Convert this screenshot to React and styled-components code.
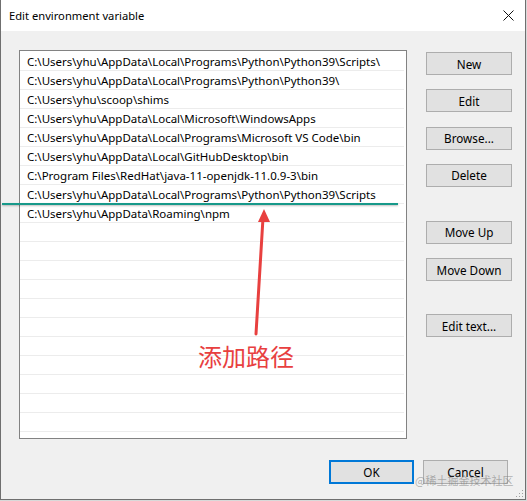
import React from 'react'
import styled, { createGlobalStyle } from 'styled-components'

const GlobalStyle = createGlobalStyle`
    html, body {
        margin: 0;
        padding: 0;
        background: #d9d9d9;
    }
    body {
        font-family: "Noto Sans", "Liberation Sans", sans-serif;
        font-size: 12px;
        color: #000;
    }
`

const Window = styled.div`
    position: relative;
    box-sizing: border-box;
    width: 526px;
    height: 500px;
    background: #f0f0f0;
    border: 1px solid #6f6f6f;
    border-top: none;
    display: flex;
    flex-direction: column;
    overflow: hidden;
`

const TitleBar = styled.div`
    height: 31px;
    flex: none;
    background: #ffffff;
    display: flex;
    align-items: center;
    justify-content: space-between;
    padding: 0 11px 0 8px;
    font-size: 11.2px;
`

const Content = styled.div`
    display: flex;
    flex-direction: column;
    padding: 19px 0 0 18px;
`

const MainRow = styled.div`
    display: flex;
    gap: 19px;
`

const ListBox = styled.div`
    box-sizing: border-box;
    width: 388px;
    height: 389px;
    background: #ffffff;
    border: 1px solid #828282;
    padding: 1px 2px 0 0;
    overflow: hidden;
`

const Row = styled.div`
    box-sizing: border-box;
    height: 19px;
    border-bottom: 1px solid #ececec;
    padding-left: 7px;
    display: flex;
    align-items: center;
    white-space: nowrap;
    font-size: 11.5px;
`

const ButtonColumn = styled.div`
    display: flex;
    flex-direction: column;
    padding-top: 2px;
`

const Button = styled.button`
    box-sizing: border-box;
    width: ${p => p.$w || 86}px;
    height: ${p => p.$h || 23}px;
    margin-top: ${p => p.$gap ?? 14.3}px;
    background: #e1e1e1;
    border: ${p => (p.$primary ? '2px solid #0078d7' : '1px solid #adadad')};
    font-family: "Noto Sans", "Liberation Sans", sans-serif;
    font-size: 11.7px;
    color: #000;
    padding: 0;
    &:first-child {
        margin-top: 0;
    }
`

const Footer = styled.div`
    display: flex;
    justify-content: flex-end;
    gap: 9px;
    padding: 21px 17px 0 0;
`

const Mark = styled.div`
    position: absolute;
    left: 1px;
    top: 203px;
    width: 396px;
    height: 2px;
    background: #17998a;
    box-shadow: 0 1px 2px rgba(0, 0, 0, 0.25);
`

const Note = styled.div`
    position: absolute;
    left: 197px;
    top: 338px;
    font-family: "Noto Sans CJK SC", "Noto Sans", sans-serif;
    font-size: 24px;
    color: #e8403f;
`

const Watermark = styled.div`
    position: absolute;
    left: 414px;
    top: 472px;
    font-family: "Noto Sans CJK SC", "Noto Sans", sans-serif;
    font-size: 11px;
    color: rgba(120, 120, 120, 0.55);
    white-space: nowrap;
`

const Overlay = styled.svg`
    position: absolute;
    left: 0;
    top: 0;
    pointer-events: none;
`

const Grip = styled.svg`
    position: absolute;
    right: 1px;
    bottom: 1px;
`

const paths = [
    'C:\\Users\\yhu\\AppData\\Local\\Programs\\Python\\Python39\\Scripts\\',
    'C:\\Users\\yhu\\AppData\\Local\\Programs\\Python\\Python39\\',
    'C:\\Users\\yhu\\scoop\\shims',
    'C:\\Users\\yhu\\AppData\\Local\\Microsoft\\WindowsApps',
    'C:\\Users\\yhu\\AppData\\Local\\Programs\\Microsoft VS Code\\bin',
    'C:\\Users\\yhu\\AppData\\Local\\GitHubDesktop\\bin',
    'C:\\Program Files\\RedHat\\java-11-openjdk-11.0.9-3\\bin',
    'C:\\Users\\yhu\\AppData\\Local\\Programs\\Python\\Python39\\Scripts',
    'C:\\Users\\yhu\\AppData\\Roaming\\npm',
]

const rows = [...paths, ...Array(12).fill('')]

const App = () => {
    return (
        <Window>
            <GlobalStyle />
            <TitleBar>
                <span>Edit environment variable</span>
                <svg width="11" height="11" viewBox="0 0 11 11">
                    <path d="M0.5 0.5 L10.5 10.5 M10.5 0.5 L0.5 10.5" stroke="#111" strokeWidth="1" />
                </svg>
            </TitleBar>
            <Content>
                <MainRow>
                    <ListBox>
                        {rows.map((p, i) => (
                            <Row key={i}>{p}</Row>
                        ))}
                    </ListBox>
                    <ButtonColumn>
                        <Button>New</Button>
                        <Button>Edit</Button>
                        <Button>Browse...</Button>
                        <Button>Delete</Button>
                        <Button $gap={34}>Move Up</Button>
                        <Button>Move Down</Button>
                        <Button $gap={33}>Edit text...</Button>
                    </ButtonColumn>
                </MainRow>
                <Footer>
                    <Button $primary $w={85} $h={24} $gap={0}>OK</Button>
                    <Button $w={85} $h={24} $gap={0}>Cancel</Button>
                </Footer>
            </Content>

            <Mark />
            <Overlay width="526" height="500">
                <line x1="255" y1="334" x2="262" y2="218" stroke="#e8403f" strokeWidth="3" strokeLinecap="round" />
                <polygon points="263,209 257,222 269,222" fill="#e8403f" />
            </Overlay>
            <Note>添加路径</Note>
            <Watermark>@稀土掘金技术社区</Watermark>
            <Grip width="8" height="8" viewBox="0 0 8 8">
                <rect x="6" y="0" width="1" height="1" fill="#a0a0a0" />
                <rect x="3" y="3" width="1" height="1" fill="#a0a0a0" />
                <rect x="6" y="3" width="1" height="1" fill="#a0a0a0" />
                <rect x="0" y="6" width="1" height="1" fill="#a0a0a0" />
                <rect x="3" y="6" width="1" height="1" fill="#a0a0a0" />
                <rect x="6" y="6" width="1" height="1" fill="#a0a0a0" />
            </Grip>
        </Window>
    )
}

export default App
